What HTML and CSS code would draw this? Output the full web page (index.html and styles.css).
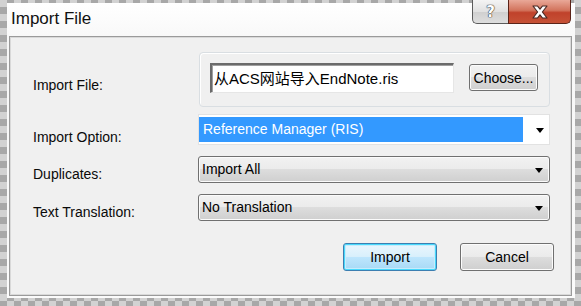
FILE: index.html
```html
<!DOCTYPE html>
<html lang="en">
<head>
    <meta charset="UTF-8">
    <title>Import File</title>
    <link rel="stylesheet" href="styles.css">
</head>
<body>
    <div class="window">
        <div class="titlebar">
            <span class="title">Import File</span>
        </div>
        <div class="caption-buttons">
            <button class="cap-help" title="Help">?</button>
            <button class="cap-close" title="Close">
                <svg width="20" height="14" viewBox="0 0 20 14">
                    <path d="M3 1 H7.5 L10 4.2 L12.5 1 H17 L12.4 7 L17 13 H12.5 L10 9.8 L7.5 13 H3 L7.6 7 Z" fill="#fff" stroke="#4a2a25" stroke-width="1.2" stroke-linejoin="round"/>
                </svg>
            </button>
        </div>
        <div class="client">
            <div class="row row-file">
                <label class="label">Import File:</label>
                <div class="groupbox">
                    <div class="textbox">从ACS网站导入EndNote.ris</div>
                    <button class="btn btn-choose">Choose...</button>
                </div>
            </div>
            <div class="row row-option">
                <label class="label">Import Option:</label>
                <div class="combo-open">
                    <div class="combo-selected">Reference Manager (RIS)</div>
                    <span class="arrow"></span>
                </div>
            </div>
            <div class="row row-dup">
                <label class="label">Duplicates:</label>
                <div class="combo">
                    <span class="combo-text">Import All</span>
                    <span class="arrow"></span>
                </div>
            </div>
            <div class="row row-trans">
                <label class="label">Text Translation:</label>
                <div class="combo">
                    <span class="combo-text">No Translation</span>
                    <span class="arrow"></span>
                </div>
            </div>
            <div class="actions">
                <button class="btn btn-default">Import</button>
                <button class="btn">Cancel</button>
            </div>
        </div>
    </div>
</body>
</html>
```

FILE: styles.css
```css
body {
    margin: 0;
    width: 581px;
    height: 306px;
    overflow: hidden;
    background-color: #d2d2d2;
    background-image:
        linear-gradient(45deg, #a8a8a8 25%, transparent 25%, transparent 75%, #a8a8a8 75%),
        linear-gradient(45deg, #a8a8a8 25%, transparent 25%, transparent 75%, #a8a8a8 75%);
    background-size: 14px 14px;
    background-position: 0 0, 7px 7px;
    font-family: "Liberation Sans", Arial, "Noto Sans CJK SC", sans-serif;
    font-size: 14px;
    color: #000;
}
.window {
    position: relative;
    margin: 3px 0 0 7px;
    width: 568px;
    height: 295px;
    box-sizing: border-box;
    background: linear-gradient(to bottom, #ffffff, #f7f7f7 40px, #fbfbfb);
    padding: 0 3px 2px 2px;
}
.titlebar {
    height: 33px;
    display: flex;
    align-items: flex-start;
}
.title {
    font-size: 17px;
    line-height: 20px;
    margin: 6px 0 0 2px;
    color: #111;
}
.caption-buttons {
    position: absolute;
    top: -3px;
    right: 4px;
    display: flex;
}
.caption-buttons button {
    height: 24px;
    border: 1px solid #5c5c5c;
    border-top: none;
    padding: 0;
    margin: 0;
    display: flex;
    align-items: center;
    justify-content: center;
}
.cap-help {
    width: 36px;
    border-radius: 0 0 0 5px;
    border-right: none !important;
    background: linear-gradient(to bottom, #f4f4f4, #e1e1e1 50%, #cfcfcf 51%, #dedede);
    font-family: "DejaVu Sans", sans-serif;
    font-weight: bold;
    font-size: 15px;
    color: #fff;
    text-shadow: 0 0 1px #333, 0 0 1px #333, 0 0 1px #333;
}
.cap-close {
    width: 63px;
    border-radius: 0 0 5px 0;
    border-color: #5a2318 !important;
    background: linear-gradient(to bottom, #e9a898, #d2735c 45%, #c0422b 55%, #c65136);
}
.client {
    height: 260px;
    box-sizing: border-box;
    border: 1px solid #9a9a9a;
    box-shadow: inset 0 0 0 1px #d9d9d9;
    background: #f0f0f0;
    padding: 15px 0 0 23px;
}
.row {
    display: flex;
    align-items: flex-start;
}
.label {
    width: 165px;
    line-height: 16px;
    flex-shrink: 0;
    color: #0a0a0a;
}
.row-file .label { margin-top: 25px; }
.row-option { margin-top: 7px; }
.row-option .label { margin-top: 15px; }
.row-dup { margin-top: 11px; }
.row-dup .label { margin-top: 10px; }
.row-trans { margin-top: 11px; }
.row-trans .label { margin-top: 10px; }
.groupbox {
    margin-left: 1px;
    width: 351px;
    height: 55px;
    box-sizing: border-box;
    border: 1px solid #d9dee2;
    border-radius: 4px;
    box-shadow: inset 1px 1px 0 #fff;
    display: flex;
    align-items: flex-start;
    padding: 10px 0 0 10px;
    gap: 15px;
}
.textbox {
    width: 244px;
    height: 30px;
    box-sizing: border-box;
    background: #fff;
    border-top: 2px solid #6b6b6b;
    border-left: 2px solid #6b6b6b;
    border-right: 1px solid #e6e6e6;
    border-bottom: 1px solid #e6e6e6;
    box-shadow: inset 1px 1px 0 #a0a0a0;
    padding: 4px 0 0 2px;
    font-size: 15px;
    line-height: 20px;
    white-space: nowrap;
}
.btn {
    font-family: inherit;
    font-size: 14px;
    color: #000;
    box-sizing: border-box;
    border: 1px solid #707070;
    border-radius: 3px;
    background: linear-gradient(to bottom, #f2f2f2, #ebebeb 48%, #dddddd 50%, #cfcfcf);
    box-shadow: inset 0 0 0 1px #fcfcfc;
    padding: 0;
    margin: 0;
}
.btn-choose {
    width: 69px;
    height: 27px;
    margin-top: 1px;
}
.combo-open {
    position: relative;
    width: 352px;
    height: 31px;
    box-sizing: border-box;
    background: #fff;
    border: 1px solid #e2e2e2;
    padding: 2px 26px 2px 0;
}
.combo-selected {
    height: 25px;
    background: #3399ff;
    color: #fff;
    line-height: 25px;
    padding-left: 4px;
    font-size: 14px;
}
.combo {
    position: relative;
    width: 352px;
    height: 27px;
    box-sizing: border-box;
    border: 1px solid #707070;
    border-radius: 3px;
    background: linear-gradient(to bottom, #f2f2f2, #ebebeb 48%, #dddddd 50%, #cfcfcf);
    box-shadow: inset 0 0 0 1px #fbfbfb;
    padding-left: 3px;
    line-height: 25px;
}
.arrow {
    position: absolute;
    right: 6px;
    top: 50%;
    margin-top: -2px;
    width: 0;
    height: 0;
    border-left: 4.5px solid transparent;
    border-right: 4.5px solid transparent;
    border-top: 5px solid #000;
}
.combo-open .arrow {
    right: 5px;
}
.actions {
    display: flex;
    justify-content: flex-end;
    gap: 23px;
    margin: 22px 17px 0 0;
}
.actions .btn {
    width: 94px;
    height: 28px;
}
.btn-default {
    border-color: #3c7fb1;
    box-shadow: inset 0 0 0 1px #48d8fb, inset 0 0 0 2px #c6ecfc;
    background: linear-gradient(to bottom, #eaf6fd, #d9f0fc 48%, #bee6fd 50%, #a7d9f5);
}
```
